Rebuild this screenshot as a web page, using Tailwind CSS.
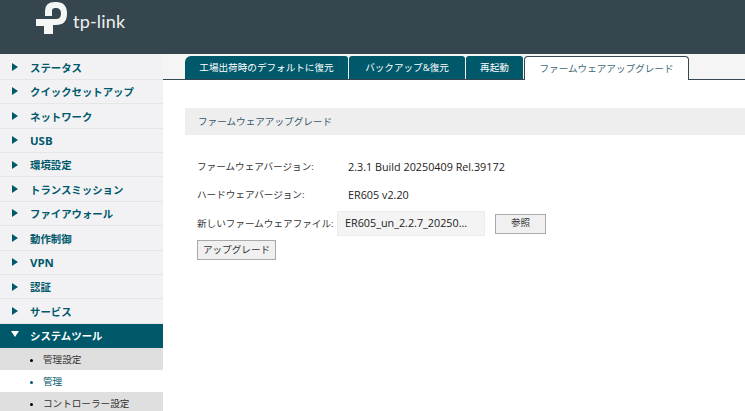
<!DOCTYPE html>
<html lang="ja"><head><meta charset="utf-8">
<script src="https://cdn.jsdelivr.net/npm/@tailwindcss/browser@4"></script>
</head>
<body class="w-[745px] h-[411px] overflow-hidden bg-white font-['Open_Sans','Noto_Sans_CJK_JP',sans-serif] text-[9.6px]">
<header class="h-[54px] bg-[#36464e] flex items-start pl-[36px] pt-[1px]">
  <svg width="31" height="34" viewBox="0 0 31 34" class="block">
    <path d="M9 15 V10 Q9 1 19 1 H20 Q31 1 31 12.500 Q31 24 20 24 H17 V18 H20 Q25 18 25 12.500 Q25 7 20 7 H19 Q16 7 16 10 V15 Z M0 18 H17 V33 H8 V25 H0 Z" fill="#f4f6f6"/>
  </svg>
  <span class="ml-[6px] mt-[10px] text-[#eef1f1] text-[18px] leading-[20px] font-['Lato',sans-serif] tracking-[0.2px]">tp-link</span>
</header>
<div class="flex h-[357px]">
  <nav class="w-[163px] shrink-0 bg-[#f2f2f4] font-bold text-[#00596b] text-[10.4px] overflow-hidden pt-[1.4px]">
    <div class="h-[24.4px] flex items-center border-b border-[#e6e6e6] pl-[12px] pt-[3px]"><svg width="6" height="8" class="mr-[12px] -mt-[3px]"><path d="M0 0 L6 4 L0 8Z" fill="#00596b"/></svg>ステータス</div>
    <div class="h-[24.4px] flex items-center border-b border-[#e6e6e6] pl-[12px] pt-[3px]"><svg width="6" height="8" class="mr-[12px] -mt-[3px]"><path d="M0 0 L6 4 L0 8Z" fill="#00596b"/></svg>クイックセットアップ</div>
    <div class="h-[24.4px] flex items-center border-b border-[#e6e6e6] pl-[12px] pt-[3px]"><svg width="6" height="8" class="mr-[12px] -mt-[3px]"><path d="M0 0 L6 4 L0 8Z" fill="#00596b"/></svg>ネットワーク</div>
    <div class="h-[24.4px] flex items-center border-b border-[#e6e6e6] pl-[12px] pt-[1px] text-[11.4px]"><svg width="6" height="8" class="mr-[12px] -mt-[1px]"><path d="M0 0 L6 4 L0 8Z" fill="#00596b"/></svg>USB</div>
    <div class="h-[24.4px] flex items-center border-b border-[#e6e6e6] pl-[12px] pt-[3px]"><svg width="6" height="8" class="mr-[12px] -mt-[3px]"><path d="M0 0 L6 4 L0 8Z" fill="#00596b"/></svg>環境設定</div>
    <div class="h-[24.4px] flex items-center border-b border-[#e6e6e6] pl-[12px] pt-[3px]"><svg width="6" height="8" class="mr-[12px] -mt-[3px]"><path d="M0 0 L6 4 L0 8Z" fill="#00596b"/></svg>トランスミッション</div>
    <div class="h-[24.4px] flex items-center border-b border-[#e6e6e6] pl-[12px] pt-[3px]"><svg width="6" height="8" class="mr-[12px] -mt-[3px]"><path d="M0 0 L6 4 L0 8Z" fill="#00596b"/></svg>ファイアウォール</div>
    <div class="h-[24.4px] flex items-center border-b border-[#e6e6e6] pl-[12px] pt-[3px]"><svg width="6" height="8" class="mr-[12px] -mt-[3px]"><path d="M0 0 L6 4 L0 8Z" fill="#00596b"/></svg>動作制御</div>
    <div class="h-[24.4px] flex items-center border-b border-[#e6e6e6] pl-[12px] pt-[1px] text-[11.4px]"><svg width="6" height="8" class="mr-[12px] -mt-[1px]"><path d="M0 0 L6 4 L0 8Z" fill="#00596b"/></svg>VPN</div>
    <div class="h-[24.4px] flex items-center border-b border-[#e6e6e6] pl-[12px] pt-[3px]"><svg width="6" height="8" class="mr-[12px] -mt-[3px]"><path d="M0 0 L6 4 L0 8Z" fill="#00596b"/></svg>認証</div>
    <div class="h-[24.4px] flex items-center border-b border-[#e6e6e6] pl-[12px] pt-[3px]"><svg width="6" height="8" class="mr-[12px] -mt-[3px]"><path d="M0 0 L6 4 L0 8Z" fill="#00596b"/></svg>サービス</div>
    <div class="h-[24.4px] flex items-center bg-[#00596b] text-white pl-[11px] pt-[1px]"><svg width="8" height="6" class="mr-[11px] -mt-[5px]"><path d="M0 0 L8 0 L4 6Z" fill="#fff"/></svg>システムツール</div>
    <div class="h-[22px] flex items-center bg-[#dfdfdf] font-normal text-[9.6px] text-[#333] pl-[30px] pt-[2px]"><span class="w-[3px] h-[3px] rounded-full bg-black mr-[10px]"></span>管理設定</div>
    <div class="h-[22px] flex items-center bg-white font-normal text-[9.6px] text-[#00596b] pl-[30px] pt-[2px]"><span class="w-[3px] h-[3px] rounded-full bg-[#00596b] mr-[10px]"></span>管理</div>
    <div class="h-[22px] flex items-center bg-[#dfdfdf] font-normal text-[9.6px] text-[#333] pl-[30px] pt-[3px]"><span class="w-[3px] h-[3px] rounded-full bg-black mr-[10px]"></span>コントローラー設定</div>
  </nav>
  <main class="flex-1 min-w-0">
    <div class="h-[26px] bg-[#f5f5f5] pl-[22px] border-b border-[#36464e] flex items-end">
      <div class="h-[23px] w-[163px] bg-[#00596b] text-white rounded-tl-[6px] rounded-tr-[3px] flex items-center justify-center pt-[1px]">工場出荷時のデフォルトに復元</div>
      <div class="h-[23px] w-[116px] ml-[1px] bg-[#00596b] text-white rounded-t-[3px] flex items-center justify-center pt-[1px]">バックアップ&amp;復元</div>
      <div class="h-[23px] w-[57px] ml-[1px] bg-[#00596b] text-white rounded-t-[3px] flex items-center justify-center pt-[1px]">再起動</div>
      <div class="h-[24px] w-[165px] ml-[1px] -mb-[1px] bg-white text-[#3d6a78] border border-b-0 border-[#36464e] rounded-t-[4px] flex items-center justify-center pt-[1px]">ファームウェアアップグレード</div>
    </div>
    <div class="pl-[22px] pt-[28px] text-[#333]">
      <div class="h-[27px] bg-[#eeeeee] text-[#36566a] pl-[13px] flex items-center pt-[1px]">ファームウェアアップグレード</div>
      <div class="pl-[12px] pt-[19px]">
        <div class="flex items-center h-[24px] pt-[2px]"><span class="w-[151px]">ファームウェアバージョン:</span><span class="text-[10.8px] text-[#222]">2.3.1 Build 20250409 Rel.39172</span></div>
        <div class="flex items-center h-[24px] mt-[4px] pt-[2px]"><span class="w-[151px]">ハードウェアバージョン:</span><span class="text-[10.8px] text-[#222]">ER605 v2.20</span></div>
        <div class="flex items-center h-[25px] mt-[5px]">
          <span class="whitespace-nowrap w-[140px] pt-[2px]">新しいファームウェアファイル:</span>
          <div class="w-[148px] h-[25px] bg-[#f4f4f4] border border-[#ececec] flex items-center pl-[7px] text-[10.8px] text-[#222]">ER605_un_2.2.7_20250...</div>
          <button class="ml-[10px] w-[51px] h-[20px] bg-[#f0f0f0] border border-[#a9a9a9]">参照</button>
        </div>
        <button class="block mt-[4px] w-[79px] h-[20px] bg-[#f0f0f0] border border-[#a9a9a9]">アップグレード</button>
      </div>
    </div>
  </main>
</div>
</body></html>
